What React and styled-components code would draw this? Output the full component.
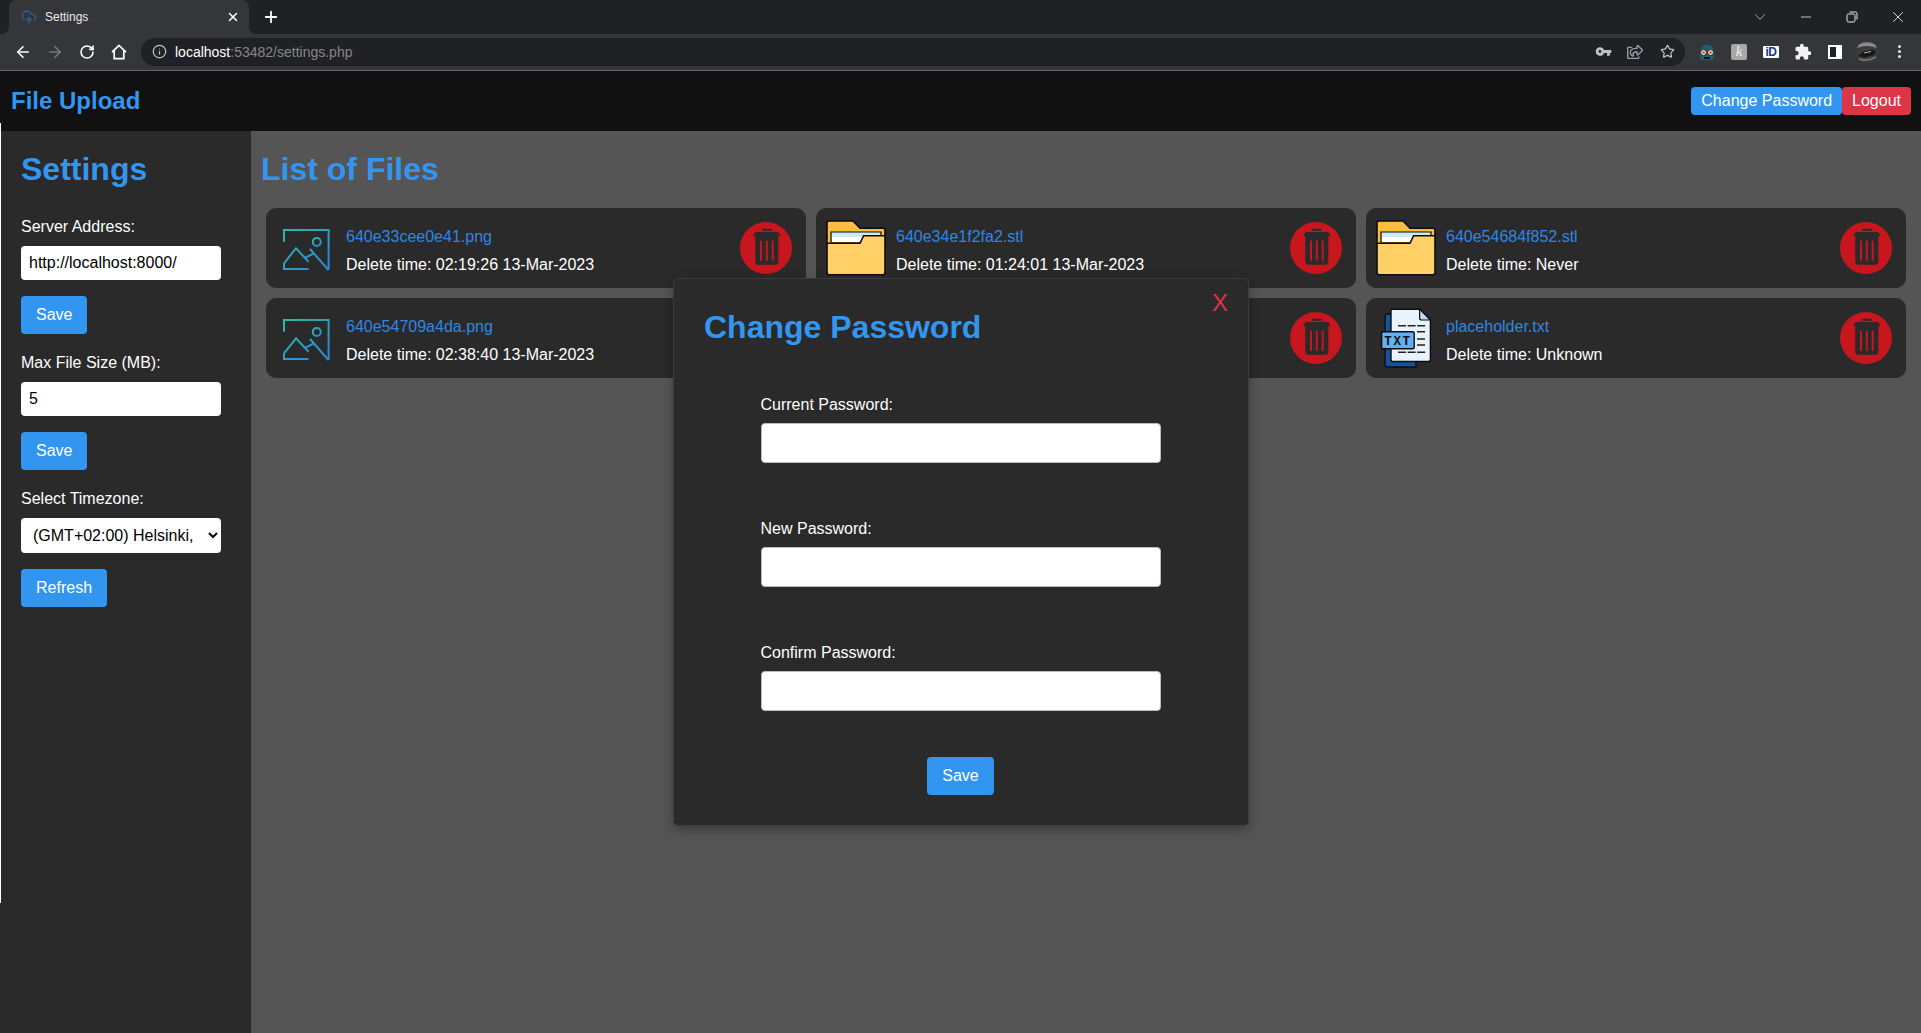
import React from 'react'
import styled, { createGlobalStyle } from 'styled-components'
import { ArrowLeft, ArrowRight, RotateCw, Info, Star, X, Plus, Minus, ChevronDown, CloudUpload } from 'lucide-react'
import { MdVpnKey, MdExtension } from 'react-icons/md'
import { FaRegShareSquare } from 'react-icons/fa'

const BLUE = '#3296f0'

const GlobalStyle = createGlobalStyle`
  html, body {
    margin: 0;
    height: 100%;
    overflow: hidden;
    background: #555;
    font-family: "Liberation Sans", Arial, sans-serif;
    font-size: 16px;
    color: #fff;
  }
  * { box-sizing: border-box; }
`

// the fifth card sits behind the modal, only its delete button shows
const files = [
  { name: '640e33cee0e41.png', time: '02:19:26 13-Mar-2023', type: 'image' },
  { name: '640e34e1f2fa2.stl', time: '01:24:01 13-Mar-2023', type: 'folder' },
  { name: '640e54684f852.stl', time: 'Never', type: 'folder' },
  { name: '640e54709a4da.png', time: '02:38:40 13-Mar-2023', type: 'image' },
  { type: 'hidden' },
  { name: 'placeholder.txt', time: 'Unknown', type: 'txt' },
]

const ImageIcon = ({ id }) => (
  <svg width="60" height="60" viewBox="0 0 60 60" fill="none">
    <defs>
      <linearGradient id={id} x1="0" y1="0" x2="1" y2="1">
        <stop offset="0" stopColor="#2fb8a4" />
        <stop offset="1" stopColor="#2a84dc" />
      </linearGradient>
    </defs>
    <path
      d="M8 23.7V12H52.6V52M8 45.3V51H32.6M8 45.3L20 30.3L32.6 43.7M29 39.8L37.9 35.3M34 31L52.4 52"
      stroke={`url(#${id})`}
      strokeWidth="2"
    />
    <circle cx="40.8" cy="24" r="4" stroke={`url(#${id})`} strokeWidth="2" />
  </svg>
)

const FolderIcon = () => (
  <svg width="60" height="60" viewBox="0 0 60 60">
    <path d="M1 5a2 2 0 0 1 2-2H27L34 10.3H57a2 2 0 0 1 2 2V30H1Z" fill="#ffbd3e" stroke="#0d0d0d" strokeWidth="1.6" />
    <path d="M5 14H55V18H38L34 24H5Z" fill="#c9ecf2" stroke="#0d0d0d" strokeWidth="1.2" />
    <path d="M6 19H37L34 24H6Z" fill="#fff" />
    <path d="M1 25.3H34L37.6 17.7H59V54.5a2.2 2.2 0 0 1-2.2 2.2H3.2A2.2 2.2 0 0 1 1 54.5Z" fill="#ffd066" stroke="#0d0d0d" strokeWidth="1.6" />
  </svg>
)

const TxtIcon = () => (
  <svg width="60" height="60" viewBox="0 0 60 60">
    <path d="M9 8a2 2 0 0 1 2-2H40V59H11a2 2 0 0 1-2-2Z" fill="#14529c" stroke="#0d0d0d" strokeWidth="1.4" />
    <path d="M15 1.2H43.6L54.4 12V51.5a2 2 0 0 1-2 2H17a2 2 0 0 1-2-2Z" fill="#e8f3fe" stroke="#0d0d0d" strokeWidth="1.4" />
    <path d="M43.6 1.2V10a2 2 0 0 0 2 2H54.4Z" fill="#bcd9f5" stroke="#0d0d0d" strokeWidth="1.2" />
    <path d="M22 17.7H50M41 23.7H50M41 31H50M41 37H50M22 44.3H50" stroke="#222" strokeWidth="1.4" strokeDasharray="8 1.6" />
    <rect x="5.6" y="23.8" width="32.6" height="17" rx="1.5" fill="#62b0f4" stroke="#0d0d0d" strokeWidth="1.4" />
    <text x="22" y="37" fontSize="12.5" fontWeight="700" fontFamily="Liberation Mono, monospace" letterSpacing="1.6" textAnchor="middle" fill="#111">TXT</text>
  </svg>
)

const TrashIcon = () => (
  <svg width="52" height="52" viewBox="0 0 52 52" fill="#2a2a2a">
    <rect x="22" y="6.7" width="10" height="2" rx="1" />
    <path d="M13.7 14a4 4 0 0 1 4-4H36a4 4 0 0 1 4 4Z" />
    <path fillRule="evenodd" d="M15.3 14H38.3V39.7a3 3 0 0 1-3 3H18.3a3 3 0 0 1-3-3ZM20 18.7V38.7H22V18.7ZM25.8 18.7V38.7H27.8V18.7ZM31.7 18.7V38.7H33.7V18.7Z" />
  </svg>
)

const HomeIcon = () => (
  <svg width="16" height="16" viewBox="0 0 16 16" fill="none" stroke="#fff" strokeWidth="1.7">
    <path d="M1 8.2 8 1.5l7 6.7M3.2 6.5V14.6H12.8V6.5" />
  </svg>
)

const RestoreIcon = () => (
  <svg width="12" height="12" viewBox="0 0 12 12" fill="none" stroke="#e8eaed" strokeWidth="1">
    <rect x="1" y="3" width="8" height="8" rx="1.5" />
    <path d="M3.5 1H9.5A1.5 1.5 0 0 1 11 2.5V8.5" />
  </svg>
)

const OwlIcon = () => (
  <svg width="18" height="18" viewBox="0 0 18 18">
    <path d="M2 9a7 7.5 0 0 1 14 0v6l-2 2H4l-2-2Z" fill="#1f5f75" />
    <circle cx="5.5" cy="9.5" r="3" fill="#f3d9cd" stroke="#222" />
    <circle cx="12.5" cy="9.5" r="3" fill="#f3d9cd" stroke="#222" />
    <circle cx="5.5" cy="9.5" r="1.3" fill="#d9492f" />
    <circle cx="12.5" cy="9.5" r="1.3" fill="#d9492f" />
    <rect x="6" y="14" width="6" height="2" fill="#111" />
  </svg>
)

const AvatarIcon = () => (
  <svg width="22" height="22" viewBox="0 0 22 22">
    <circle cx="11" cy="11" r="11" fill="#3c3c3c" />
    <path d="M3 3.5Q11 -1 19 3.5L21 7Q11 3 1 7Z" fill="#8b8b8b" />
    <path d="M2 15L8 10.5L15 9L20 10L18 14L8 16.5Z" fill="#161616" />
    <path d="M8 12L15 10.5" stroke="#b5b5b5" strokeWidth="1" />
    <path d="M3 18Q11 21 20 16" stroke="#777" strokeWidth="1.5" fill="none" />
  </svg>
)

const App = () => {
  return (
    <>
      <GlobalStyle />
      <Frame>
        <TabStrip>
          <Tab>
            <CloudUpload size={16} color="#2f5f9e" />
            <TabTitle>Settings</TabTitle>
            <X size={14} color="#fff" strokeWidth={2.5} />
          </Tab>
          <NewTab><Plus size={18} color="#fff" strokeWidth={2.4} /></NewTab>
          <WindowControls>
            <WindowButton><ChevronDown size={18} color="#bdc1c6" strokeWidth={1.2} /></WindowButton>
            <WindowButton><Minus size={16} color="#e8eaed" strokeWidth={1.2} /></WindowButton>
            <WindowButton><RestoreIcon /></WindowButton>
            <WindowButton><X size={18} color="#e8eaed" strokeWidth={1.2} /></WindowButton>
          </WindowControls>
        </TabStrip>

        <Toolbar>
          <ToolButton><ArrowLeft size={18} color="#fff" strokeWidth={2.2} /></ToolButton>
          <ToolButton><ArrowRight size={18} color="#77797c" strokeWidth={2.2} /></ToolButton>
          <ToolButton><RotateCw size={16} color="#fff" strokeWidth={2.4} /></ToolButton>
          <ToolButton><HomeIcon /></ToolButton>
          <AddressBar>
            <Info size={15} color="#bdc1c6" />
            <Url>localhost<UrlRest>:53482/settings.php</UrlRest></Url>
            <ToolButton><MdVpnKey size={17} color="#bdc1c6" /></ToolButton>
            <ToolButton><FaRegShareSquare size={16} color="#9aa0a6" /></ToolButton>
            <ToolButton><Star size={15} color="#bdc1c6" strokeWidth={2} /></ToolButton>
          </AddressBar>
          <Extensions>
            <ToolButton><OwlIcon /></ToolButton>
            <ToolButton><KeepBadge>k</KeepBadge></ToolButton>
            <ToolButton><IdBadge>iD</IdBadge></ToolButton>
            <ToolButton><MdExtension size={18} color="#f1f3f4" /></ToolButton>
            <ToolButton><SidePanel /></ToolButton>
            <ToolButton><AvatarIcon /></ToolButton>
            <ToolButton><Dots><i /><i /><i /></Dots></ToolButton>
          </Extensions>
        </Toolbar>

        <Navbar>
          <Brand>File Upload</Brand>
          <NavActions>
            <NavButton>Change Password</NavButton>
            <NavButton $danger>Logout</NavButton>
          </NavActions>
        </Navbar>

        <Body>
          <Sidebar>
            <Heading>Settings</Heading>
            <SideLabel>Server Address:</SideLabel>
            <SideInput defaultValue="http://localhost:8000/" />
            <Button>Save</Button>
            <SideLabel>Max File Size (MB):</SideLabel>
            <SideInput defaultValue="5" />
            <Button>Save</Button>
            <SideLabel>Select Timezone:</SideLabel>
            <SideSelect defaultValue="helsinki">
              <option value="helsinki">(GMT+02:00) Helsinki, Kyiv, Riga, Sofia, Tallinn, Vilnius</option>
            </SideSelect>
            <Button>Refresh</Button>
          </Sidebar>

          <Main>
            <Heading>List of Files</Heading>
            <FileGrid>
              {files.map((f, i) => (
                <FileCard key={i}>
                  <FileIcon>
                    {f.type === 'image' && <ImageIcon id={`img-grad-${i}`} />}
                    {f.type === 'folder' && <FolderIcon />}
                    {f.type === 'txt' && <TxtIcon />}
                  </FileIcon>
                  <FileInfo>
                    {f.name && <FileLink>{f.name}</FileLink>}
                    {f.name && <DeleteTime>Delete time: {f.time}</DeleteTime>}
                  </FileInfo>
                  <DeleteButton><TrashIcon /></DeleteButton>
                </FileCard>
              ))}
            </FileGrid>
          </Main>
        </Body>

        <Modal>
          <CloseX>X</CloseX>
          <Heading>Change Password</Heading>
          <ModalForm>
            <Field>
              <FieldLabel>Current Password:</FieldLabel>
              <ModalInput type="password" />
            </Field>
            <Field>
              <FieldLabel>New Password:</FieldLabel>
              <ModalInput type="password" />
            </Field>
            <Field>
              <FieldLabel>Confirm Password:</FieldLabel>
              <ModalInput type="password" />
            </Field>
            <Button>Save</Button>
          </ModalForm>
        </Modal>
      </Frame>
    </>
  )
}

export default App

const Frame = styled.div`
  position: relative;
  display: flex;
  flex-direction: column;
  height: 1033px;
  overflow: hidden;

  &::before {
    content: '';
    position: absolute;
    left: 0;
    top: 123px;
    width: 1px;
    height: 780px;
    background: #fff;
    z-index: 2;
  }
`

const TabStrip = styled.div`
  display: flex;
  align-items: center;
  height: 34px;
  padding-left: 9px;
  background: #202124;
`

const Tab = styled.div`
  position: relative;
  display: flex;
  align-items: center;
  align-self: stretch;
  gap: 8px;
  width: 240px;
  padding: 0 9px 0 12px;
  background: #35363a;
  border-radius: 8px 8px 0 0;

  &::before,
  &::after {
    content: '';
    position: absolute;
    bottom: 0;
    width: 8px;
    height: 8px;
  }
  &::before {
    left: -8px;
    background: radial-gradient(circle at 0 0, transparent 8px, #35363a 8.5px);
  }
  &::after {
    right: -8px;
    background: radial-gradient(circle at 100% 0, transparent 8px, #35363a 8.5px);
  }
`

const TabTitle = styled.span`
  flex: 1;
  font-size: 12px;
  color: #e8eaed;
`

const NewTab = styled.div`
  display: flex;
  align-items: center;
  justify-content: center;
  width: 28px;
  height: 28px;
  margin-left: 8px;
`

const WindowControls = styled.div`
  display: flex;
  margin-left: auto;
`

const WindowButton = styled.div`
  display: flex;
  align-items: center;
  justify-content: center;
  width: 46px;
  height: 28px;
`

const Toolbar = styled.div`
  display: flex;
  align-items: center;
  height: 37px;
  padding: 0 6px 1px 7px;
  background: #35363a;
  border-bottom: 1px solid #66676a;
`

const ToolButton = styled.div`
  display: flex;
  flex: none;
  align-items: center;
  justify-content: center;
  width: 32px;
  height: 28px;
`

const AddressBar = styled.div`
  display: flex;
  flex: 1;
  align-items: center;
  height: 28px;
  margin: 0 6px;
  padding: 0 2px 0 11px;
  background: #202124;
  border-radius: 14px;
`

const Url = styled.span`
  flex: 1;
  margin-left: 8px;
  font-size: 14px;
  color: #fff;
`

const UrlRest = styled.span`
  color: #85878a;
`

const Extensions = styled.div`
  display: flex;
`

const KeepBadge = styled.span`
  display: flex;
  align-items: center;
  justify-content: center;
  width: 16px;
  height: 16px;
  background: #a8a8a8;
  border-radius: 2px;
  font-family: "Liberation Serif", serif;
  font-size: 15px;
  font-style: italic;
  color: #f2f2f2;
`

const IdBadge = styled.span`
  display: flex;
  align-items: center;
  justify-content: center;
  width: 16px;
  height: 12px;
  background: #fff;
  border-radius: 1px;
  font-size: 12px;
  font-weight: 700;
  letter-spacing: -0.5px;
  color: #10398f;
`

const SidePanel = styled.span`
  width: 14px;
  height: 14px;
  background: linear-gradient(90deg, #202124 0 60%, #fff 60%);
  border: 2px solid #fff;
`

const Dots = styled.span`
  display: flex;
  flex-direction: column;
  gap: 2px;

  i {
    width: 3px;
    height: 3px;
    background: #e8eaed;
    border-radius: 50%;
  }
`

const Navbar = styled.header`
  display: flex;
  flex: none;
  align-items: center;
  justify-content: space-between;
  height: 60px;
  padding: 0 10px 0 11px;
  background: #111;
`

const Brand = styled.div`
  font-size: 24px;
  font-weight: 700;
  color: ${BLUE};
`

const NavActions = styled.div`
  display: flex;
`

const NavButton = styled.button`
  height: 28px;
  padding: 0 10px;
  border: 0;
  border-radius: 4px;
  background: ${(p) => (p.$danger ? '#dc3545' : BLUE)};
  font: inherit;
  color: #fff;
`

const Body = styled.div`
  display: flex;
  flex: 1;
`

const Sidebar = styled.aside`
  display: flex;
  flex: none;
  flex-direction: column;
  align-items: flex-start;
  width: 251px;
  padding: 20px 21px 0;
  background: #2a2a2a;
`

const Heading = styled.h2`
  margin: 0;
  font-size: 32px;
  line-height: 37px;
  font-weight: 700;
  color: ${BLUE};
`

const SideLabel = styled.label`
  display: block;
  margin: 20px 0 10px;
  line-height: 18px;
  color: #fff;

  ${Heading} + & {
    margin-top: 30px;
  }
`

const SideInput = styled.input`
  width: 200px;
  height: 34px;
  padding: 0 8px;
  border: 0;
  border-radius: 4px;
  outline: 0;
  background: #fff;
  font: inherit;
  color: #000;
`

const SideSelect = styled.select`
  width: 200px;
  height: 35px;
  padding: 0 8px;
  border: 0;
  border-radius: 4px;
  background: #fff;
  font: inherit;
  color: #000;
`

const Button = styled.button`
  height: 38px;
  margin-top: 16px;
  padding: 0 15px;
  border: 0;
  border-radius: 4px;
  background: ${BLUE};
  font: inherit;
  color: #fff;
`

const Main = styled.main`
  flex: 1;
  padding: 20px 10px 0;
  background: #555;
`

const FileGrid = styled.div`
  display: grid;
  grid-template-columns: repeat(3, 1fr);
  margin-top: 15px;
`

const FileCard = styled.div`
  display: flex;
  align-items: center;
  height: 80px;
  margin: 5px;
  padding: 0 14px 0 10px;
  background: #2a2a2a;
  border-radius: 10px;
`

const FileIcon = styled.div`
  display: flex;
  flex: none;
  width: 60px;
  height: 60px;
  margin-right: 10px;
`

const FileInfo = styled.div`
  display: flex;
  flex: 1;
  flex-direction: column;
  gap: 10px;
  padding-top: 6px;
`

const FileLink = styled.a`
  line-height: 18px;
  color: #2f86e6;
`

const DeleteTime = styled.span`
  line-height: 18px;
  color: #fff;
`

const DeleteButton = styled.div`
  display: flex;
  flex: none;
  width: 52px;
  height: 52px;
  background: #c8161f;
  border-radius: 50%;
`

const Modal = styled.div`
  position: absolute;
  top: 278px;
  left: 673px;
  z-index: 3;
  display: flex;
  flex-direction: column;
  width: 576px;
  height: 548px;
  padding: 30px 31px 0 30px;
  background: #2a2a2a;
  border: 1px solid #3c3c3c;
  border-radius: 5px;
  box-shadow: 0 4px 12px rgba(0, 0, 0, 0.3);
`

const CloseX = styled.span`
  position: absolute;
  top: 10px;
  right: 20px;
  font-size: 24px;
  line-height: 28px;
  color: #dc3545;
`

const ModalForm = styled.form`
  display: flex;
  flex-direction: column;
  align-items: center;
  margin-top: 50px;
`

const Field = styled.div`
  display: flex;
  flex-direction: column;
  width: 400px;
  margin-bottom: 57px;

  &:nth-of-type(3) {
    margin-bottom: 30px;
  }
`

const FieldLabel = styled.label`
  margin-bottom: 9px;
  line-height: 18px;
  color: #fff;
`

const ModalInput = styled.input`
  height: 40px;
  padding: 0 8px;
  border: 1px solid #bbb;
  border-radius: 4px;
  outline: 0;
  background: #fff;
`
